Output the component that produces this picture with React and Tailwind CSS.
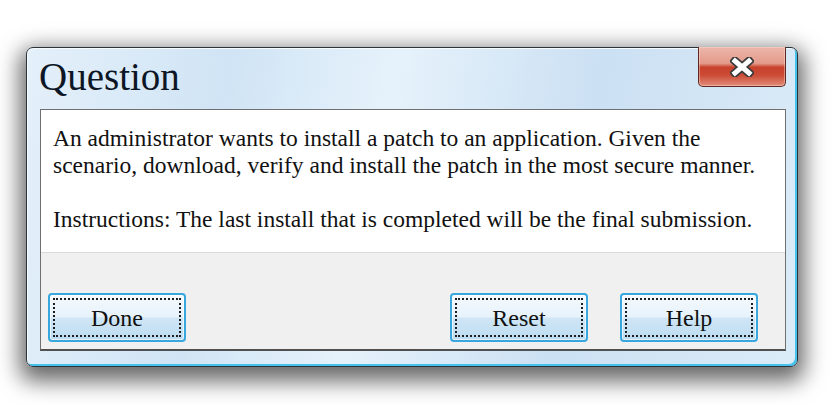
function CloseGlyph() {
  return (
    <svg width="24" height="20" viewBox="0 0 24 20">
      <path d="M5 4 L19 16 M19 4 L5 16" stroke="#3b3b3b" strokeWidth="8.5" strokeLinecap="square" fill="none" />
      <path d="M5 4 L19 16 M19 4 L5 16" stroke="#ffffff" strokeWidth="5" strokeLinecap="square" fill="none" />
    </svg>
  );
}

function DialogButton({ label }) {
  return (
    <button className="w-[138px] h-[49px] rounded-[4px] border-2 border-[#37a7dd] p-[3px] bg-[linear-gradient(to_bottom,#f5fafe_0%,#e7f2fb_48%,#cfe6f6_52%,#bddcf1_100%)] shadow-[inset_0_0_0_1px_rgba(255,255,255,0.6)]">
      <div className="h-full border-2 border-dotted border-[#1e1e1e] flex items-center justify-center text-[24px] leading-none text-[#111]">
        {label}
      </div>
    </button>
  );
}

export default function App() {
  return (
    <div className="w-[840px] h-[405px] bg-white overflow-hidden pt-[47px] font-['Liberation_Serif','Times_New_Roman',serif] text-black">
      {/* window frame */}
      <div className="ml-[26px] w-[772px] h-[320px] rounded-[7px] border border-[#2b333c] bg-[linear-gradient(100deg,#e4f0fa_0%,#d0e4f5_25%,#e6f2fb_45%,#cbe0f3_70%,#dbecf8_100%)] shadow-[inset_-2px_-2px_0_#45c3ec,inset_1px_1px_0_#f6fbff,0_8px_22px_6px_rgba(0,0,0,0.6)] flex flex-col pl-[13px] pr-[11px]">
        {/* title bar */}
        <div className="h-[61px] flex justify-between items-start">
          <h1 className="pt-[9px] text-[39px] leading-none font-normal text-[#0d1624] -ml-px">Question</h1>
          <button className="-mt-px w-[88px] h-[40px] rounded-b-[5px] border border-t-0 border-[#5c2a22] bg-[linear-gradient(to_bottom,#ecb7ac_0%,#e49a8a_42%,#c8412c_52%,#cc4b35_72%,#e28d7a_100%)] shadow-[inset_0_0_0_1px_rgba(255,220,210,0.45)] flex items-center justify-center">
            <CloseGlyph />
          </button>
        </div>

        {/* content panel */}
        <div className="h-[242px] border border-[#6f6f6f] border-b-2 border-b-[#505050] flex flex-col">
          <div className="h-[142px] bg-white px-[12px] pt-[15px] text-[23.5px] leading-[27px] text-[#111] whitespace-nowrap">
            An administrator wants to install a patch to an application. Given the
            <br />
            scenario, download, verify and install the patch in the most secure manner.
            <br />
            <br />
            Instructions: The last install that is completed will be the final submission.
          </div>
          <div className="flex-1 bg-[#f0f0f0] border-t border-[#dadada] flex items-end justify-between pl-[7px] pr-[27px] pb-[7px]">
            <DialogButton label="Done" />
            <div className="flex gap-[32px]">
              <DialogButton label="Reset" />
              <DialogButton label="Help" />
            </div>
          </div>
        </div>
      </div>
    </div>
  );
}
